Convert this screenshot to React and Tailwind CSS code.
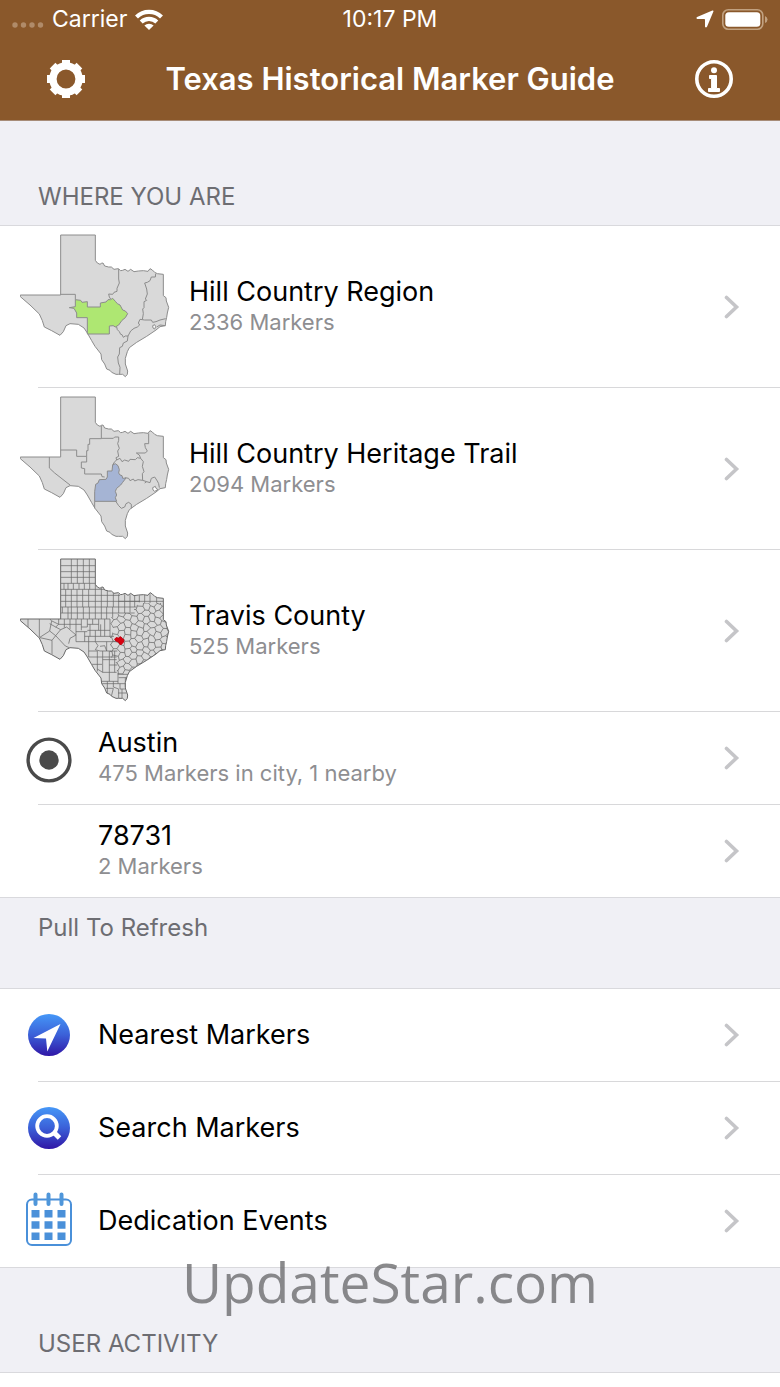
import React from "react";

const OUTLINE =
  "M152 28H256V104L262 112L270 116L274 113L279 112L284 121L296 124L304 124L312 131L318 130L325 129L332 135L338 134L345 131L354 137L362 131L372 138L385 136L400 135L414 137L420 129L427 133L434 140L442 144L460 146V210L468 216L469 226L476 245L472 262L470 275L467 288L466 300L450 303L438 313L410 332L380 350L358 366L352 378L346 398L346 415L353 436L352 446L346 453L338 446L325 446L318 446L305 440L300 434L290 430L284 415L275 402L273 385L255 362L245 345L232 322L222 307L205 296L180 294L168 300L160 318L150 329L125 315L103 304L97 285L88 265L60 238L31 213V208H152Z";

const BAY = "M428 300L434 297L437 303L434 310L429 307Z";

function TexasMap({ label, children, stroke = "#8c8c8c" }) {
  return (
    <svg
      role="img"
      aria-label={label}
      viewBox="30 25 450 435"
      className="h-[145px] w-[150px] shrink-0"
      fill="none"
      stroke={stroke}
      strokeWidth="3"
      strokeLinejoin="round"
    >
      <path d={OUTLINE} fill="#d9d9d9" />
      {children}
    </svg>
  );
}

function RegionMap() {
  return (
    <TexasMap label="Hill Country Region map">
      <path d="M152 206H196V222M326 130V160L328 172L321 188V197L312 200L308 206L296 205L298 214L302 220M437 144L436 154L424 154L420 165L412 170L404 172L410 190L412 205L406 220L410 224L402 228L402 246L398 250L400 264L397 282L404 283H424L428 290L438 288L450 283L467 279M397 282L390 281L385 292L389 298L382 304L372 308L362 316L354 331L346 331L340 335L336 327L332 326L328 318L322 312L320 304L310 300M354 331L352 346L340 352L337 362L329 366L328 385L323 394L325 412L330 425L329 446M466 300L450 298L440 304" />
      <path
        d="M196 222L212 224L216 230L232 228V244H271V232L288 229L294 222H302L308 218L317 228L322 234L330 238L338 253L346 256L353 264L346 276L336 284L326 298L316 304L310 300L298 301V325H232V276H200V262L192 248L178 246L196 243Z"
        fill="#aee772"
      />
      <path d={BAY} fill="#fff" />
    </TexasMap>
  );
}

function TrailMap() {
  return (
    <TexasMap label="Hill Country Heritage Trail map">
      <path d="M152 187H200V206H230V189H234V170H239V153H274V114M274 152H310L314 148H326V158L323 168L328 182L323 190L326 206L318 210L320 217M118 208V241L134 256L180 292M230 206V223H214V241L224 243V259H274L276 267L284 268M416 137V168H404L406 180L412 190L406 196H379L388 202L392 212L382 210L376 216L360 215L356 221L344 217L336 222L330 212L320 217M392 212L400 222L397 236L402 252L397 258L398 278L410 282L404 286M410 282L420 285L424 272L434 268L442 280L446 288L448 300M346 270L356 272L360 279L370 274L374 280L384 276L398 278M314 340L318 342L326 354L334 362L344 358L348 348L356 344L364 350V362M254 341V362" />
      <path
        d="M254 341V312L257 290L264 286L268 276L288 275L292 268V250H306L308 232L316 228L324 234L328 246L326 256L330 262L336 264L338 272L348 271L338 284L332 292L320 302L316 311L320 322L316 330L320 341Z"
        fill="#a5b4d4"
      />
      <path d="M308 232L314 222L320 217" />
      <path d="M428 300L436 296L438 302L444 306L434 311L429 307Z" fill="#fff" />
    </TexasMap>
  );
}

function cellNoise(i, j, k) {
  const v = Math.sin(i * 127.1 + j * 311.7 + k * 74.7) * 43758.5453;
  return v - Math.floor(v) - 0.5;
}

/* Irregular, tilted six-sided cells for the small eastern counties. */
function easternCounties() {
  const step = 10.5;
  const height = 19;
  const angle = -0.5;
  const place = (k, j) => {
    const low = (k + j) % 2 !== 0;
    const x = k * step + cellNoise(k, j, 1) * 6;
    const y = j * height + (low ? 3.5 : -3.5) + cellNoise(k, j, 2) * 6;
    return [
      Math.round(385 + x * Math.cos(angle) - y * Math.sin(angle)),
      Math.round(280 + x * Math.sin(angle) + y * Math.cos(angle)),
    ];
  };
  let d = "";
  for (let j = -12; j <= 12; j += 1) {
    for (let k = -22; k <= 22; k += 1) {
      const a = place(k, j);
      const b = place(k + 1, j);
      d += `M${a[0]} ${a[1]}L${b[0]} ${b[1]}`;
      if ((k + j) % 2 !== 0) {
        const c = place(k, j + 1);
        d += `M${a[0]} ${a[1]}L${c[0]} ${c[1]}`;
      }
    }
  }
  return d;
}

const EAST_CELLS = easternCounties();

function CountyMap() {
  return (
    <TexasMap label="Travis County map" stroke="#686868">
      <clipPath id="state-shape">
        <path d={OUTLINE} />
      </clipPath>
      <clipPath id="east-shape">
        <path d="M294 207L330 190H372V172L390 160H480V320L360 366L356 374H322L318 340L300 318V262L312 240Z" />
      </clipPath>
      <g clipPath="url(#state-shape)" strokeWidth="2.2">
        <path d="M152 48H256M152 66H256M152 83H256M152 101H256M152 119H284M152 137H330M152 155H390M152 172H380M152 190H374M152 208H300M184 28V101M202 28V101M220 28V101M238 28V101M162 101V119M174 101V119M190 101V119M207 101V119M223 101V119M239 101V119M167 119V172M184 119V172M201 119V172M218 119V172M236 119V172M256 104V172M274 114V172M292 122V172M310 130V172M157 172V190M174 172V208M184 172V208M202 172V208M220 172V208M238 172V208M256 172V208M274 172V208M290 172V208M308 172V204M326 134V190M344 134V190M360 134V188M374 137V172M388 137V158M404 134V160M420 134V160M440 143V160M324 155H460" />
        <path d="M120 208L125 214L119 244L88 264M54 208V232M88 208V262M119 244L137 258L126 272L90 264M126 272V314M137 258L166 289L178 294M119 222L137 232L152 240L137 258M137 232L146 224L126 214M146 224H214M152 240L170 232L198 256L180 266L176 282M146 208V224M163 208V234M180 208V238M198 208V276M214 208V242M198 246H232M198 276H236M214 232H232V208M232 224H266M232 242H300M224 260H312M240 224V260M248 208V224M266 208V242M284 208V260M300 208V262M236 260V322M256 242V276M272 224V260M224 246V276M236 276H320M256 276L264 288L256 300L270 304H290L284 288L270 290M290 276V304H322M236 304H262V365M236 322H320M278 304V368M246 344H276M262 358L278 368H320M298 304V395M298 346H322M278 330H320M314 304V368M273 395H324M275 402H346M292 395V430M310 395V412L326 418V446M288 416H310L304 440M324 370V402M324 374H358M326 384H352M330 402V418H346M346 384V412M324 430H350M336 418V446" />
        <g clipPath="url(#east-shape)">
          <path d={EAST_CELLS} />
        </g>
      </g>
      <path
        d="M318 264L326 265L332 261L337 267L342 270L340 278L332 286L325 277L318 274L314 269Z"
        fill="#d8000f"
        stroke="#c40010"
      />
    </TexasMap>
  );
}

function TargetIcon() {
  return (
    <svg viewBox="0 0 46 50" className="h-[50px] w-[46px]" aria-hidden="true">
      <circle cx="23" cy="27" r="20.9" fill="none" stroke="#4a4a4a" strokeWidth="3.4" />
      <circle cx="23" cy="27" r="9.7" fill="#4a4a4a" />
    </svg>
  );
}

function BlueDisc({ id, children }) {
  return (
    <svg viewBox="0 0 42 42" className="size-[42px]" aria-hidden="true">
      <defs>
        <linearGradient id={id} x1="0" y1="0" x2="0" y2="1">
          <stop offset="0" stopColor="#4597f7" />
          <stop offset="0.5" stopColor="#3b60d8" />
          <stop offset="1" stopColor="#3016a6" />
        </linearGradient>
      </defs>
      <circle cx="21" cy="21" r="21" fill={`url(#${id})`} />
      {children}
    </svg>
  );
}

function NearestIcon() {
  return (
    <BlueDisc id="disc-nearest">
      <path d="M32.5 10L19.3 37.5L18 24.5L5.5 24Z" fill="#fff" />
    </BlueDisc>
  );
}

function SearchIcon() {
  return (
    <BlueDisc id="disc-search">
      <circle cx="19" cy="19" r="9.8" fill="none" stroke="#fff" strokeWidth="3.8" />
      <path d="M25.5 25L31.5 31" stroke="#fff" strokeWidth="5" />
    </BlueDisc>
  );
}

function CalendarIcon() {
  return (
    <svg viewBox="0 0 46 58" className="h-[58px] w-[46px]" fill="none" aria-hidden="true">
      <rect x="1" y="7.5" width="44" height="45.5" rx="5" stroke="#4a90d9" strokeWidth="2" />
      <path d="M9.5 2.5V12M22.5 2.5V12M35.5 2.5V12" stroke="#4f96da" strokeWidth="4" strokeLinecap="round" />
      <path
        d="M5.5 18h8v7.5h-8zM18.500 18h8v7.500h-8zM31.500 18h8v7.500h-8zM5.500 29.300h8v7.500h-8zM18.500 29.300h8v7.500h-8zM31.500 29.300h8v7.500h-8zM5.500 40.500h8v7.500h-8zM18.500 40.500h8v7.500h-8zM31.500 40.500h8v7.500h-8z"
        fill="#4a90d9"
      />
    </svg>
  );
}

function GearIcon() {
  return (
    <svg viewBox="-19 -19 38 38" className="size-[38px]" aria-hidden="true">
      <circle r="13.1" fill="none" stroke="#fff" strokeWidth="7.4" />
      <g fill="#fff">
        {[0, 45, 90, 135, 180, 225, 270, 315].map((a) => (
          <path key={a} d="M-4 -19H4V-13H-4Z" transform={`rotate(${a})`} />
        ))}
      </g>
    </svg>
  );
}

function InfoIcon() {
  return (
    <svg viewBox="0 0 38 38" className="size-[38px]" aria-hidden="true">
      <circle cx="19" cy="19" r="17.2" fill="none" stroke="#fff" strokeWidth="3.6" />
      <circle cx="19" cy="10.3" r="3" fill="#fff" />
      <path
        d="M14.500 15.500H21.500V28.500H24.500V31.500H13.500V28.500H16.600V18.500H14.500Z"
        fill="#fff"
        stroke="#fff"
        strokeLinejoin="round"
      />
    </svg>
  );
}

function Chevron() {
  return (
    <svg viewBox="0 0 16 24" className="h-6 w-4 shrink-0" fill="none" aria-hidden="true">
      <path d="M2.500 2.500L12.500 12L2.500 21.500" stroke="#c5c5c8" strokeWidth="3.600" strokeLinecap="round" />
    </svg>
  );
}

function Row({ icon, title, detail, wide = false }) {
  return (
    <li className="before:ml-[38px] before:block before:h-px before:bg-[#d8d8da] first:before:hidden">
      <a
        href="#"
        className={
          wide
            ? "flex items-center gap-[19px] py-2 pr-10 pl-5"
            : "flex h-[92px] items-center gap-[26px] pr-10 pl-[26px]"
        }
      >
        {wide ? icon : <span className="flex w-[46px] shrink-0 justify-center">{icon}</span>}
        <span className="min-w-0 flex-1">
          <span className="block text-[27px] leading-[30px] text-black">{title}</span>
          {detail && <span className="block text-[22px] leading-[30px] text-[#8e8e91]">{detail}</span>}
        </span>
        <Chevron />
      </a>
    </li>
  );
}

function SectionTitle({ children }) {
  return <h2 className="px-[38px] pt-[62px] pb-[14px] text-[24px] leading-7 text-[#6d6d72]">{children}</h2>;
}

function Rows({ children }) {
  return <ul className="border-y border-[#d9d9dd] bg-white">{children}</ul>;
}

function StatusBar() {
  return (
    <div className="grid grid-cols-[1fr_auto_1fr] items-center px-3 text-[23px] leading-[38px]">
      <div className="flex items-center gap-2">
        <svg viewBox="0 0 32 6" className="mt-3 h-[6px] w-8" fill="#b08b69" aria-hidden="true">
          <circle cx="3" cy="3" r="2.7" />
          <circle cx="11.500" cy="3" r="2.7" />
          <circle cx="20" cy="3" r="2.7" />
          <circle cx="28.500" cy="3" r="2.7" />
        </svg>
        <span>Carrier</span>
        <svg viewBox="0 0 28 21" className="h-[21px] w-7" fill="none" stroke="#fff" strokeWidth="4.2" aria-label="Wi-Fi">
          <path d="M1.500 8A18 18 0 0 1 26.500 8" />
          <path d="M6.200 13A11.300 11.300 0 0 1 21.800 13" />
          <path d="M14 21L9.400 16.500A6.600 6.600 0 0 1 18.600 16.500Z" fill="#fff" stroke="none" />
        </svg>
      </div>
      <time>10:17 PM</time>
      <div className="flex items-center justify-end gap-2">
        <svg viewBox="0 0 18 18" className="size-[18px]" fill="#fff" aria-label="Location in use">
          <path d="M16.400 0.500Q17.800 0.200 17.400 1.600L11 16.800Q9.900 18.300 9 16.800V9.800Q9 9 8.200 9H1.200Q-0.300 8 1.100 7Z" />
        </svg>
        <svg viewBox="0 0 46 21" className="h-[21px] w-[46px]" aria-label="Battery full">
          <rect x="0.8" y="0.8" width="40" height="19.4" rx="5.5" fill="none" stroke="#c1a180" strokeWidth="1.6" />
          <rect x="3.300" y="3.300" width="35" height="14.400" rx="3.5" fill="#fff" />
          <path d="M43 7Q45.500 8 45.500 10.500Q45.500 13 43 14Z" fill="#c1a180" />
        </svg>
      </div>
    </div>
  );
}

export default function App() {
  return (
    <div className="flex min-h-screen flex-col bg-white font-['Inter','Liberation_Sans',sans-serif]">
      <header className="border-b border-[#a78c78] bg-[#8a582b] text-white">
        <StatusBar />
        <div className="flex h-[82px] items-center justify-between px-[47px]">
          <button type="button" aria-label="Settings">
            <GearIcon />
          </button>
          <h1 className="text-[31px] leading-9 font-semibold">Texas Historical Marker Guide</h1>
          <button type="button" aria-label="Information">
            <InfoIcon />
          </button>
        </div>
      </header>

      <main className="bg-[#f0f0f5]">
        <section>
          <SectionTitle>WHERE YOU ARE</SectionTitle>
          <Rows>
            <Row wide icon={<RegionMap />} title="Hill Country Region" detail="2336 Markers" />
            <Row wide icon={<TrailMap />} title="Hill Country Heritage Trail" detail="2094 Markers" />
            <Row wide icon={<CountyMap />} title="Travis County" detail="525 Markers" />
            <Row icon={<TargetIcon />} title="Austin" detail="475 Markers in city, 1 nearby" />
            <Row title="78731" detail="2 Markers" />
          </Rows>
          <p className="px-[38px] pt-4 pb-[46px] text-[24px] leading-7 text-[#6d6d72]">Pull To Refresh</p>
        </section>

        <Rows>
          <Row icon={<NearestIcon />} title="Nearest Markers" />
          <Row icon={<SearchIcon />} title="Search Markers" />
          <Row icon={<CalendarIcon />} title="Dedication Events" />
        </Rows>

        <section className="relative border-b border-[#d9d9dd]">
          <SectionTitle>USER ACTIVITY</SectionTitle>
          <p className="pointer-events-none absolute inset-x-0 -top-[22px] text-center font-['Open_Sans','Noto_Sans',sans-serif] text-[55px] leading-[72px] text-[#6d6d6f]/80">
            UpdateStar.com
          </p>
        </section>
      </main>
    </div>
  );
}
